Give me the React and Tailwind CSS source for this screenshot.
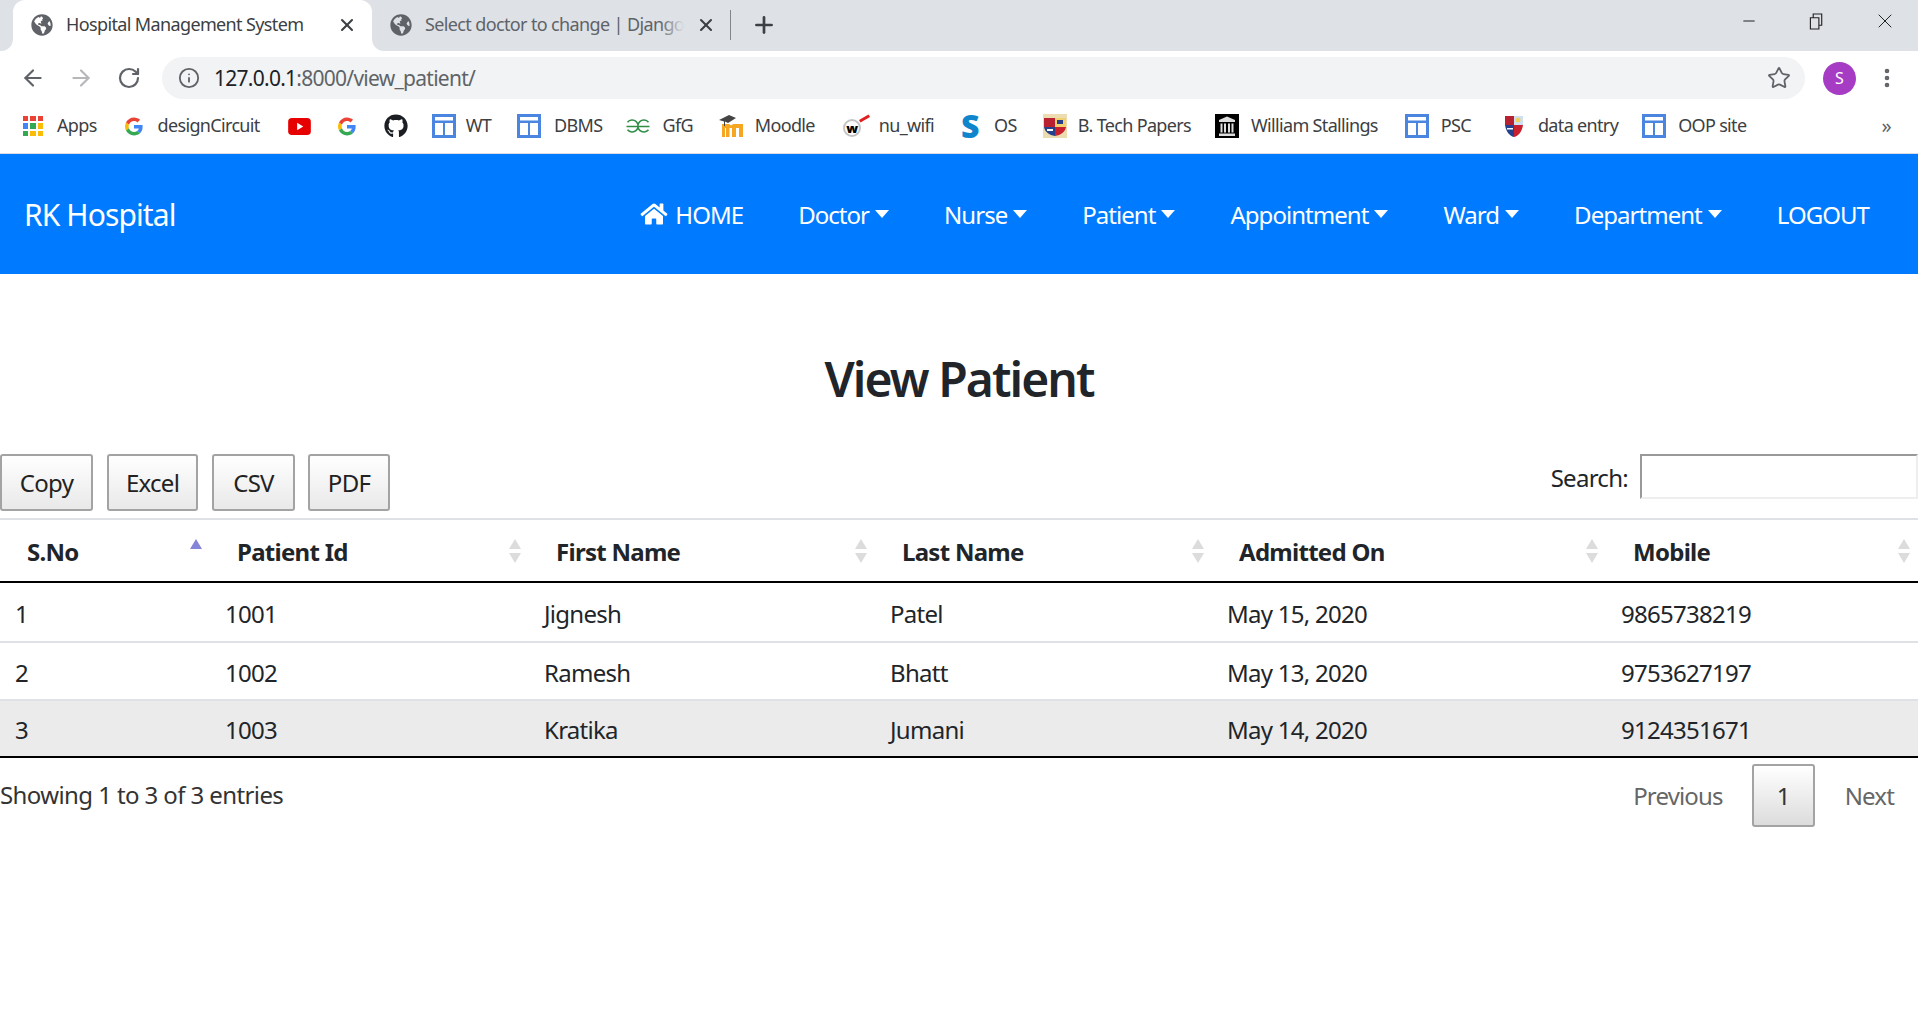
import React from "react";
import { ArrowLeft, ArrowRight, Info, MoreVertical, Plus, RotateCw, Star, X, Minus } from "lucide-react";
import { FaGithub, FaGlobeAmericas, FaHome } from "react-icons/fa";

const GoogleG = ({ className }) => (
    <svg viewBox="0 0 48 48" className={className}>
        <path fill="#EA4335" d="M24 9.500c3.500 0 6.700 1.200 9.200 3.600l6.900-6.900C35.900 2.400 30.400 0 24 0 14.600 0 6.600 5.400 2.600 13.200l8 6.200C12.500 13.700 17.800 9.500 24 9.500z" />
        <path fill="#4285F4" d="M47 24.500c0-1.600-.1-3.100-.4-4.500H24v9.100h12.900c-.6 3-2.200 5.500-4.700 7.200l7.700 6C44.400 38.100 47 31.900 47 24.500z" />
        <path fill="#FBBC05" d="M10.600 28.600c-.5-1.400-.8-3-.8-4.600s.3-3.200.8-4.600l-8-6.200C.9 16.500 0 20.100 0 24s.9 7.500 2.600 10.800l8-6.200z" />
        <path fill="#34A853" d="M24 48c6.500 0 11.900-2.100 15.900-5.800l-7.700-6c-2.200 1.500-4.900 2.300-8.200 2.300-6.200 0-11.500-4.200-13.400-9.900l-8 6.200C6.600 42.600 14.600 48 24 48z" />
    </svg>
);

const AppsIcon = () => (
    <span className="grid grid-cols-3 gap-[2px] w-[20px] h-[20px]">
        {["#ea4335", "#ea4335", "#ea4335", "#4285f4", "#34a853", "#fbbc05", "#34a853", "#fbbc05", "#fbbc05"].map((c, i) => (
            <span key={i} style={{ background: c }} />
        ))}
    </span>
);

const SiteBox = () => (
    <svg viewBox="0 0 24 24" className="w-[24px] h-[24px]">
        <path fill="#4a86e0" d="M0 0h24v24H0z" />
        <path fill="#fff" d="M3 3h18v18H3z" />
        <path fill="#4a86e0" d="M3 6.500h18v2.500H3zM11 9h2v12h-2z" />
    </svg>
);

const YouTube = () => (
    <svg viewBox="0 0 24 18" className="w-[23px] h-[17px]">
        <rect width="24" height="18" rx="4" fill="#e60000" />
        <path fill="#fff" d="M9.500 5l6.500 4-6.500 4z" />
    </svg>
);

const GfgIcon = () => (
    <svg viewBox="0 0 24 14" className="w-[24px] h-[14px]" fill="none" stroke="#2f8d46" strokeWidth="1.500">
        <path d="M1.500 3.200A6 6 0 1 1 1.500 10.800M.5 7.500H12M22.500 3.200A6 6 0 1 0 22.500 10.800M23.500 7.500H12" />
    </svg>
);

const MoodleIcon = () => (
    <svg viewBox="0 0 24 24" className="w-[24px] h-[24px]">
        <path fill="#f5a623" d="M3 23V10h6c1.500 0 2.300.6 3 1.600.9-1 2-1.600 3.500-1.600H24v13h-4v-9h-3v9h-4v-9h-2.500v9H7v-9H6v9z" />
        <path fill="#444" d="M0 6l10-5 7 3-8 5-3-1.500V12H5V7.500z" />
    </svg>
);

const WifiIcon = () => (
    <span className="relative flex w-[27px] h-[22px] items-end">
        <span className="w-[18px] h-[18px] rounded-full bg-white border-2 border-[#c4c4c4] flex items-center justify-center text-[13px] leading-none font-black text-black">w</span>
        <span className="absolute right-0 top-[2px] w-[11px] h-[3px] bg-[#e02020] -rotate-[30deg]" />
    </span>
);

const ShieldTan = () => (
    <svg viewBox="0 0 24 24" className="w-[24px] h-[24px]">
        <path fill="#ecdcb0" d="M0 0h24v24H0z" />
        <path fill="#b92030" d="M1 4h11v9H1z" />
        <path fill="#f0d070" d="M12 4h11v9H12z" />
        <path fill="#27408b" d="M1 13h11v9C6 21 2 18 1 13z" />
        <path fill="#c8202c" d="M12 13h11c-1 5-5 8-11 9z" />
        <path fill="#fff" d="M4 15h6v2H4z" />
        <path fill="#27408b" d="M14 6h6v4h-6z" />
    </svg>
);

const ShieldSmall = () => (
    <svg viewBox="0 0 18 22" className="w-[18px] h-[22px]">
        <path fill="#b92030" d="M0 1h9v9H0z" />
        <path fill="#cfe0f5" d="M9 1h9v9H9z" />
        <path fill="#27408b" d="M0 10h9v12C4 21 1 16 0 10z" />
        <path fill="#c8202c" d="M9 10h9c-1 6-4 11-9 12z" />
        <path fill="#fff" d="M2 13h6v1.500H2z" />
        <circle cx="13" cy="5" r="2.500" fill="#f0d060" />
    </svg>
);

const StallingsIcon = () => (
    <svg viewBox="0 0 24 24" className="w-[24px] h-[24px]">
        <path fill="#000" d="M0 0h24v24H0z" />
        <path fill="#ddd" d="M4 6l8-3.500L20 6v2H4zM5.500 9.500h2v9h-2zM9 9.500h2v9H9zM13 9.500h2v9h-2zM16.500 9.500h2v9h-2zM4 19.500h16V22H4z" />
    </svg>
);

const bookmarks = [
    { icon: <AppsIcon />, label: "Apps", cls: "ml-[23px] gap-[14px]" },
    { icon: <GoogleG className="w-[18px] h-[19px]" />, label: "designCircuit", cls: "ml-[28px] gap-[15px]" },
    { icon: <YouTube />, cls: "ml-[28px]" },
    { icon: <GoogleG className="w-[18px] h-[19px]" />, cls: "ml-[27px]" },
    { icon: <FaGithub className="w-[24px] h-[24px] text-[#1b1f23]" />, cls: "ml-[28px]" },
    { icon: <SiteBox />, label: "WT", cls: "ml-[24px] gap-[10px]" },
    { icon: <SiteBox />, label: "DBMS", cls: "ml-[26px] gap-[13px]" },
    { icon: <GfgIcon />, label: "GfG", cls: "ml-[24px] gap-[12px]" },
    { icon: <MoodleIcon />, label: "Moodle", cls: "ml-[26px] gap-[12px]" },
    { icon: <WifiIcon />, label: "nu_wifi", cls: "ml-[28px] gap-[9px]" },
    { icon: <span className="w-[18px] text-[32px] leading-[24px] font-black text-[#0f86cc] tracking-normal">S</span>, label: "OS", cls: "ml-[27px] gap-[15px]" },
    { icon: <ShieldTan />, label: "B. Tech Papers", cls: "ml-[26px] gap-[11px]" },
    { icon: <StallingsIcon />, label: "William Stallings", cls: "ml-[24px] gap-[12px]" },
    { icon: <SiteBox />, label: "PSC", cls: "ml-[27px] gap-[12px]" },
    { icon: <ShieldSmall />, label: "data entry", cls: "ml-[34px] gap-[15px]" },
    { icon: <SiteBox />, label: "OOP site", cls: "ml-[24px] gap-[12px]" },
];

const BrowserBar = () => (
    <div className="bg-white">
        {/* Tab strip */}
        <div className="h-[51px] bg-[#dee1e6] flex relative">
            <div className="relative ml-[13px] w-[359px] h-[51px] bg-white rounded-t-[12px] flex items-center text-[18px] text-[#3c4043] tracking-[-0.035em] pb-[2px]">
                <span className="absolute -left-[13px] bottom-0 w-[13px] h-[13px] bg-white">
                    <span className="block w-full h-full bg-[#dee1e6] rounded-br-[12px]" />
                </span>
                <span className="absolute -right-[13px] bottom-0 w-[13px] h-[13px] bg-white">
                    <span className="block w-full h-full bg-[#dee1e6] rounded-bl-[12px]" />
                </span>
                <FaGlobeAmericas className="ml-[18px] w-[22px] h-[22px] text-[#5f6368]" />
                <span className="ml-[13px] w-[268px] whitespace-nowrap">Hospital Management System</span>
                <X size={20} strokeWidth={2.5} className="text-[#3c4043] ml-[3px]" />
            </div>
            <div className="flex items-center text-[18px] text-[#5f6368] tracking-[-0.035em] pb-[2px]">
                <FaGlobeAmericas className="ml-[18px] w-[22px] h-[22px] text-[#5f6368]" />
                <span className="relative ml-[13px] w-[259px] whitespace-nowrap">
                    Select doctor to change | Django
                    <span className="absolute right-0 top-0 h-full w-[24px] bg-gradient-to-r from-transparent to-[#dee1e6]" />
                </span>
                <X size={20} strokeWidth={2.5} className="text-[#3c4043] ml-[12px]" />
                <span className="ml-[14px] w-[1px] h-[30px] bg-[#80868b]" />
                <Plus size={26} strokeWidth={2.5} className="text-[#3c4043] ml-[20px]" />
            </div>
            <div className="ml-auto flex items-center text-[#222] pb-[9px]">
                <Minus size={18} strokeWidth={1.4} />
                <svg viewBox="0 0 16 18" className="w-[16px] h-[17px] ml-[51px]" fill="none" stroke="#222" strokeWidth="1.200">
                    <path d="M1 5h9v12H1zM4 5V1h9v12h-3" />
                </svg>
                <X size={24} strokeWidth={1} className="ml-[48px] mr-[21px]" />
            </div>
        </div>

        {/* Toolbar */}
        <div className="h-[54px] flex items-center">
            <ArrowLeft size={26} strokeWidth={2} className="ml-[20px] text-[#5f6368]" />
            <ArrowRight size={26} strokeWidth={2} className="ml-[22px] text-[#b5b7ba]" />
            <RotateCw size={24} strokeWidth={2.2} className="ml-[23px] text-[#5f6368]" />
            <div className="ml-[21px] w-[1643px] h-[42px] bg-[#f1f3f4] rounded-full flex items-center">
                <Info size={22} strokeWidth={2} className="ml-[16px] text-[#5f6368]" />
                <span className="ml-[14px] pt-[1px] text-[21px] tracking-[-0.035em] text-[#5f6368]">
                    <span className="text-[#202124]">127.0.0.1</span>:8000/view_patient/
                </span>
                <Star size={24} strokeWidth={1.8} className="ml-auto mr-[14px] text-[#5f6368]" />
            </div>
            <span className="ml-[18px] w-[33px] h-[33px] rounded-full bg-[#a73cc4] text-white text-[16px] flex items-center justify-center">S</span>
            <MoreVertical size={24} strokeWidth={2.6} className="ml-[19px] text-[#5f6368]" />
        </div>

        {/* Bookmarks */}
        <div className="h-[49px] flex items-center text-[18px] text-[#3c4043] tracking-[-0.037em] pb-[6px] border-b border-[#dadce0]">
            {bookmarks.map((b, i) => (
                <span key={i} className={"flex items-center whitespace-nowrap " + b.cls}>
                    {b.icon}
                    {b.label && <span className="-mt-[1px]">{b.label}</span>}
                </span>
            ))}
            <span className="ml-auto mr-[27px] text-[20px] text-[#5f6368]">»</span>
        </div>
    </div>
);

const Caret = () => (
    <span className="ml-[6px] inline-block w-0 h-0 border-x-[7px] border-x-transparent border-t-[8px] border-t-white mb-[3px]" />
);

const navItems = ["Doctor", "Nurse", "Patient", "Appointment", "Ward", "Department"];

const Navbar = () => (
    <div className="h-[120px] bg-[#007bff] flex items-center text-white pl-[24px] pr-[49px]">
        <span className="text-[30px] tracking-[-0.03em]">RK Hospital</span>
        <div className="ml-auto flex items-center gap-[55px] text-[24px] tracking-[-0.04em] pt-[2px]">
            <span className="flex items-center">
                <FaHome className="w-[28px] h-[24px] mr-[7px] -mt-[2px]" />
                HOME
            </span>
            {navItems.map((n) => (
                <span key={n} className="flex items-center">
                    {n}
                    <Caret />
                </span>
            ))}
            <span>LOGOUT</span>
        </div>
    </div>
);

const SortArrows = ({ active }) => (
    <svg viewBox="0 0 14 24" className="w-[14px] h-[24px] shrink-0 -mt-[3px]">
        <path d="M7 0l6 10H1z" fill={active ? "#8484d8" : "#dcdcdc"} />
        {!active && <path d="M7 24l6-10H1z" fill="#dcdcdc" />}
    </svg>
);

const columns = ["S.No", "Patient Id", "First Name", "Last Name", "Admitted On", "Mobile"];

const rows = [
    ["1", "1001", "Jignesh", "Patel", "May 15, 2020", "9865738219"],
    ["2", "1002", "Ramesh", "Bhatt", "May 13, 2020", "9753627197"],
    ["3", "1003", "Kratika", "Jumani", "May 14, 2020", "9124351671"],
];

const rowCls = [
    "h-[60px] border-t-2 border-[#dee2e6]",
    "h-[58px] border-t-2 border-[#dee2e6]",
    "h-[57px] bg-[#ebebeb] border-t-2 border-t-[#dee2e6] border-b-2 border-b-black",
];

const ExportButton = ({ children, className }) => (
    <button className={"h-[57px] border-2 border-[#a3a3a3] rounded-[3px] bg-gradient-to-b from-white to-[#e9e9e9] text-[24px] text-[#222] " + className}>
        {children}
    </button>
);

const PatientTable = () => (
    <table className="w-[1918px] table-fixed border-collapse border-t-2 border-[#dee2e6]">
        <colgroup>
            <col className="w-[210px]" />
            <col className="w-[319px]" />
            <col className="w-[346px]" />
            <col className="w-[337px]" />
            <col className="w-[394px]" />
            <col className="w-[312px]" />
        </colgroup>
        <thead>
            <tr className="h-[63px] border-b-2 border-black">
                {columns.map((c, i) => (
                    <th key={c} className="p-0 pl-[27px] pr-[7px] pt-[3px] text-left">
                        <div className="flex items-center justify-between">
                            <span>{c}</span>
                            <SortArrows active={i === 0} />
                        </div>
                    </th>
                ))}
            </tr>
        </thead>
        <tbody>
            {rows.map((r, i) => (
                <tr key={r[0]} className={rowCls[i]}>
                    {r.map((v, j) => (
                        <td key={j} className="p-0 pl-[15px] pt-[3px]">{v}</td>
                    ))}
                </tr>
            ))}
        </tbody>
    </table>
);

const App = () => (
    <div className="min-h-screen bg-white overflow-hidden font-['Noto_Sans',sans-serif]">
        <BrowserBar />
        <Navbar />

        <h1 className="h-[180px] flex items-center justify-center text-[48px] font-semibold text-[#212529] tracking-[-0.04em] pt-[30px]">
            View Patient
        </h1>

        <div className="text-[24px] text-[#212529] tracking-[-0.03em]">
            <div className="h-[64px] flex items-start">
                <ExportButton className="w-[93px]">Copy</ExportButton>
                <ExportButton className="ml-[14px] w-[91px]">Excel</ExportButton>
                <ExportButton className="ml-[14px] w-[83px]">CSV</ExportButton>
                <ExportButton className="ml-[13px] w-[82px]">PDF</ExportButton>
                <label className="ml-auto flex items-center">
                    <span className="pt-[2px]">Search:</span>
                    <input className="ml-[12px] w-[278px] h-[45px] border-2 border-t-[#999] border-l-[#999] border-r-[#eee] border-b-[#eee]" />
                </label>
            </div>

            <PatientTable />

            <div className="flex items-start">
                <span className="mt-[19px] tracking-[-0.025em] text-[#333]">Showing 1 to 3 of 3 entries</span>
                <div className="ml-auto flex items-center mt-[6px] text-[#666] tracking-[-0.035em]">
                    <span>Previous</span>
                    <span className="ml-[29px] w-[63px] h-[63px] border-2 border-[#a3a3a3] rounded-[3px] bg-gradient-to-b from-white to-[#dcdcdc] flex items-center justify-center text-[#333]">1</span>
                    <span className="ml-[30px] mr-[24px]">Next</span>
                </div>
            </div>
        </div>
    </div>
);

export default App;
